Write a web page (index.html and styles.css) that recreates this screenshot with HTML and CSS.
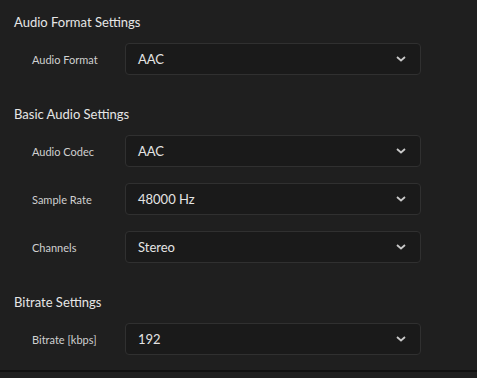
FILE: index.html
```html
<!DOCTYPE html>
<html lang="en">
<head>
  <meta charset="UTF-8">
  <title>Audio Settings</title>
  <link rel="stylesheet" href="styles.css">
</head>
<body>

<div class="panel">
  <!-- Audio format -->
  <section class="group">
    <h3>Audio Format Settings</h3>
    <div class="row">
      <label>Audio Format</label>
      <div class="select"><span>AAC</span><svg class="chev" width="10" height="6" viewBox="0 0 10 6"><path d="M1 1l4 3.5L9 1" fill="none" stroke="#c9c9c9" stroke-width="1.8"/></svg></div>
    </div>
  </section>

  <!-- Basic audio -->
  <section class="group">
    <h3>Basic Audio Settings</h3>
    <div class="row">
      <label>Audio Codec</label>
      <div class="select"><span>AAC</span><svg class="chev" width="10" height="6" viewBox="0 0 10 6"><path d="M1 1l4 3.5L9 1" fill="none" stroke="#c9c9c9" stroke-width="1.8"/></svg></div>
    </div>
    <div class="row">
      <label>Sample Rate</label>
      <div class="select"><span>48000 Hz</span><svg class="chev" width="10" height="6" viewBox="0 0 10 6"><path d="M1 1l4 3.5L9 1" fill="none" stroke="#c9c9c9" stroke-width="1.8"/></svg></div>
    </div>
    <div class="row">
      <label>Channels</label>
      <div class="select"><span>Stereo</span><svg class="chev" width="10" height="6" viewBox="0 0 10 6"><path d="M1 1l4 3.5L9 1" fill="none" stroke="#c9c9c9" stroke-width="1.8"/></svg></div>
    </div>
  </section>

  <!-- Bitrate -->
  <section class="group">
    <h3>Bitrate Settings</h3>
    <div class="row">
      <label>Bitrate [kbps]</label>
      <div class="select"><span>192</span><svg class="chev" width="10" height="6" viewBox="0 0 10 6"><path d="M1 1l4 3.5L9 1" fill="none" stroke="#c9c9c9" stroke-width="1.8"/></svg></div>
    </div>
  </section>
</div>

<div class="footer"></div>

</body>
</html>
```

FILE: styles.css
```css
html, body {
  margin: 0;
  background: #1f1f1f;
}

body {
  font-family: 'Lato', 'Liberation Sans', sans-serif;
  color: #e2e2e2;
  height: 378px;
  overflow: hidden;
}

.panel {
  padding: 14px 0 15px 14px;
  border-bottom: 2px solid #111;
  display: flex;
  flex-direction: column;
  gap: 31px;
}

.group {
  display: flex;
  flex-direction: column;
  gap: 16px;
}

.group h3 {
  margin: 0 0 -3px;
  font-size: 13px;
  font-weight: 400;
  line-height: 16px;
  color: #e6e6e6;
}

.row {
  display: grid;
  grid-template-columns: 93px 296px;
  align-items: center;
  padding-left: 18px;
}

.row label {
  font-size: 11px;
  color: #d0d0d0;
}

.select {
  box-sizing: border-box;
  height: 32px;
  display: flex;
  align-items: center;
  justify-content: space-between;
  padding: 0 14px 0 12px;
  background: #1a1a1a;
  border: 1px solid #303030;
  border-radius: 4px;
  font-size: 13px;
  color: #e4e4e4;
}

.chev {
  display: block;
}

.footer {
  height: 6px;
}
```
